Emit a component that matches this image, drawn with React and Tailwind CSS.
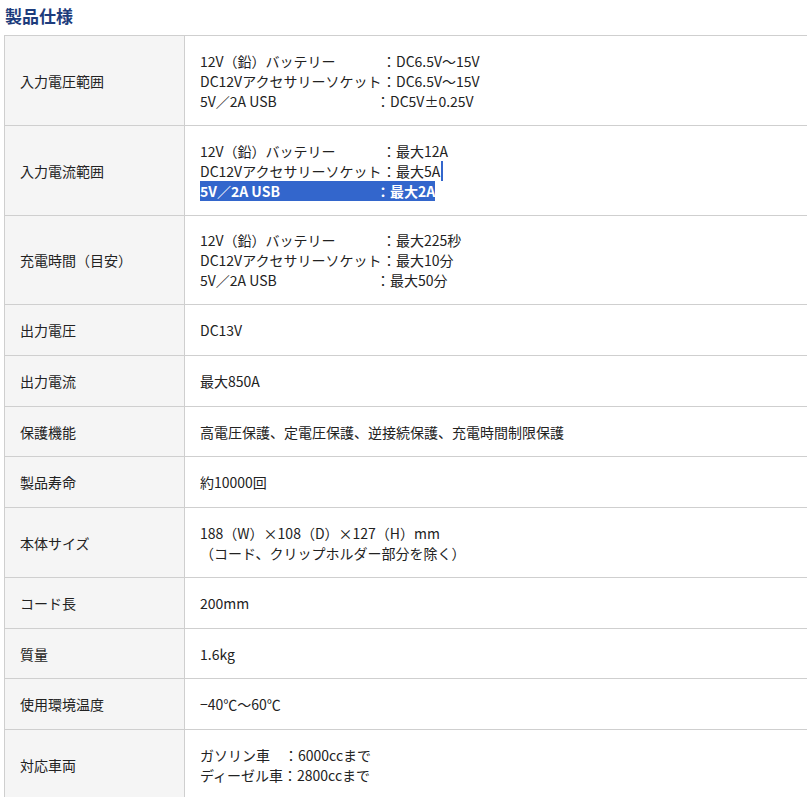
const rows = [
  { h: "h-[90px]", label: "入力電圧範囲", lines: [["12V（鉛）バッテリー", "：DC6.5V～15V", "w-[182px]"], ["DC12Vアクセサリーソケット", "：DC6.5V～15V", "w-[182px]"], ["5V／2A USB", "：DC5V±0.25V", "w-[176px]"]] },
  { h: "h-[90px]", label: "入力電流範囲", sel: true, lines: [["12V（鉛）バッテリー", "：最大12A", "w-[182px]"], ["DC12Vアクセサリーソケット", "：最大5A", "w-[182px]"], ["5V／2A USB", "：最大2A", "w-[176px]"]] },
  { h: "h-[89px]", label: "充電時間（目安）", lines: [["12V（鉛）バッテリー", "：最大225秒", "w-[182px]"], ["DC12Vアクセサリーソケット", "：最大10分", "w-[182px]"], ["5V／2A USB", "：最大50分", "w-[176px]"]] },
  { h: "h-[51px]", label: "出力電圧", text: ["DC13V"] },
  { h: "h-[51px]", label: "出力電流", text: ["最大850A"] },
  { h: "h-[50px]", label: "保護機能", text: ["高電圧保護、定電圧保護、逆接続保護、充電時間制限保護"] },
  { h: "h-[51px]", label: "製品寿命", text: ["約10000回"] },
  { h: "h-[70px]", label: "本体サイズ", text: ["188（W）×108（D）×127（H）mm", "（コード、クリップホルダー部分を除く）"] },
  { h: "h-[51px]", label: "コード長", text: ["200mm"] },
  { h: "h-[50px]", label: "質量", text: ["1.6kg"] },
  { h: "h-[51px]", label: "使用環境温度", text: ["−40℃～60℃"] },
  { h: "h-[70px]", label: "対応車両", text: ["ガソリン車　：6000ccまで", "ディーゼル車：2800ccまで"] },
];

export default function App() {
  return (
    <div className="h-[797px] w-[807px] overflow-hidden bg-white text-[14px] leading-[20px] text-[#222]" style={{ fontFamily: '"Noto Sans CJK JP", "Noto Sans", sans-serif' }}>
      <h2 className="px-[5px] pt-[4px] text-[17px] font-bold leading-[24px] text-[#1d3c7c]">製品仕様</h2>
      <div className="mt-[7px] ml-[4px] w-[830px] border-t border-l border-[#cfcfcf]">
        {rows.map((r, i) => (
          <div key={i} className={`flex ${r.h} border-b border-[#cfcfcf]`}>
            <div className="flex w-[180px] shrink-0 items-center border-r border-[#cfcfcf] bg-[#f5f5f5] pl-[15px]">{r.label}</div>
            <div className="flex flex-1 flex-col justify-center pl-[15px]">
              {r.lines
                ? r.lines.map(([a, b, w], j) => {
                    const hl = r.sel && j === 2;
                    return (
                      <div key={j} className="flex">
                        <div className={`flex ${hl ? "bg-[#3366cc] font-bold text-white" : ""}`}>
                          <span className={`inline-block whitespace-nowrap ${w}`}>{a}</span>
                          <span className="whitespace-nowrap">{b}</span>
                        </div>
                        {r.sel && j === 1 && <span className="ml-[1px] inline-block h-[20px] w-[2px] bg-[#3366cc]" />}
                      </div>
                    );
                  })
                : r.text.map((t, j) => <div key={j}>{t}</div>)}
            </div>
          </div>
        ))}
      </div>
    </div>
  );
}
